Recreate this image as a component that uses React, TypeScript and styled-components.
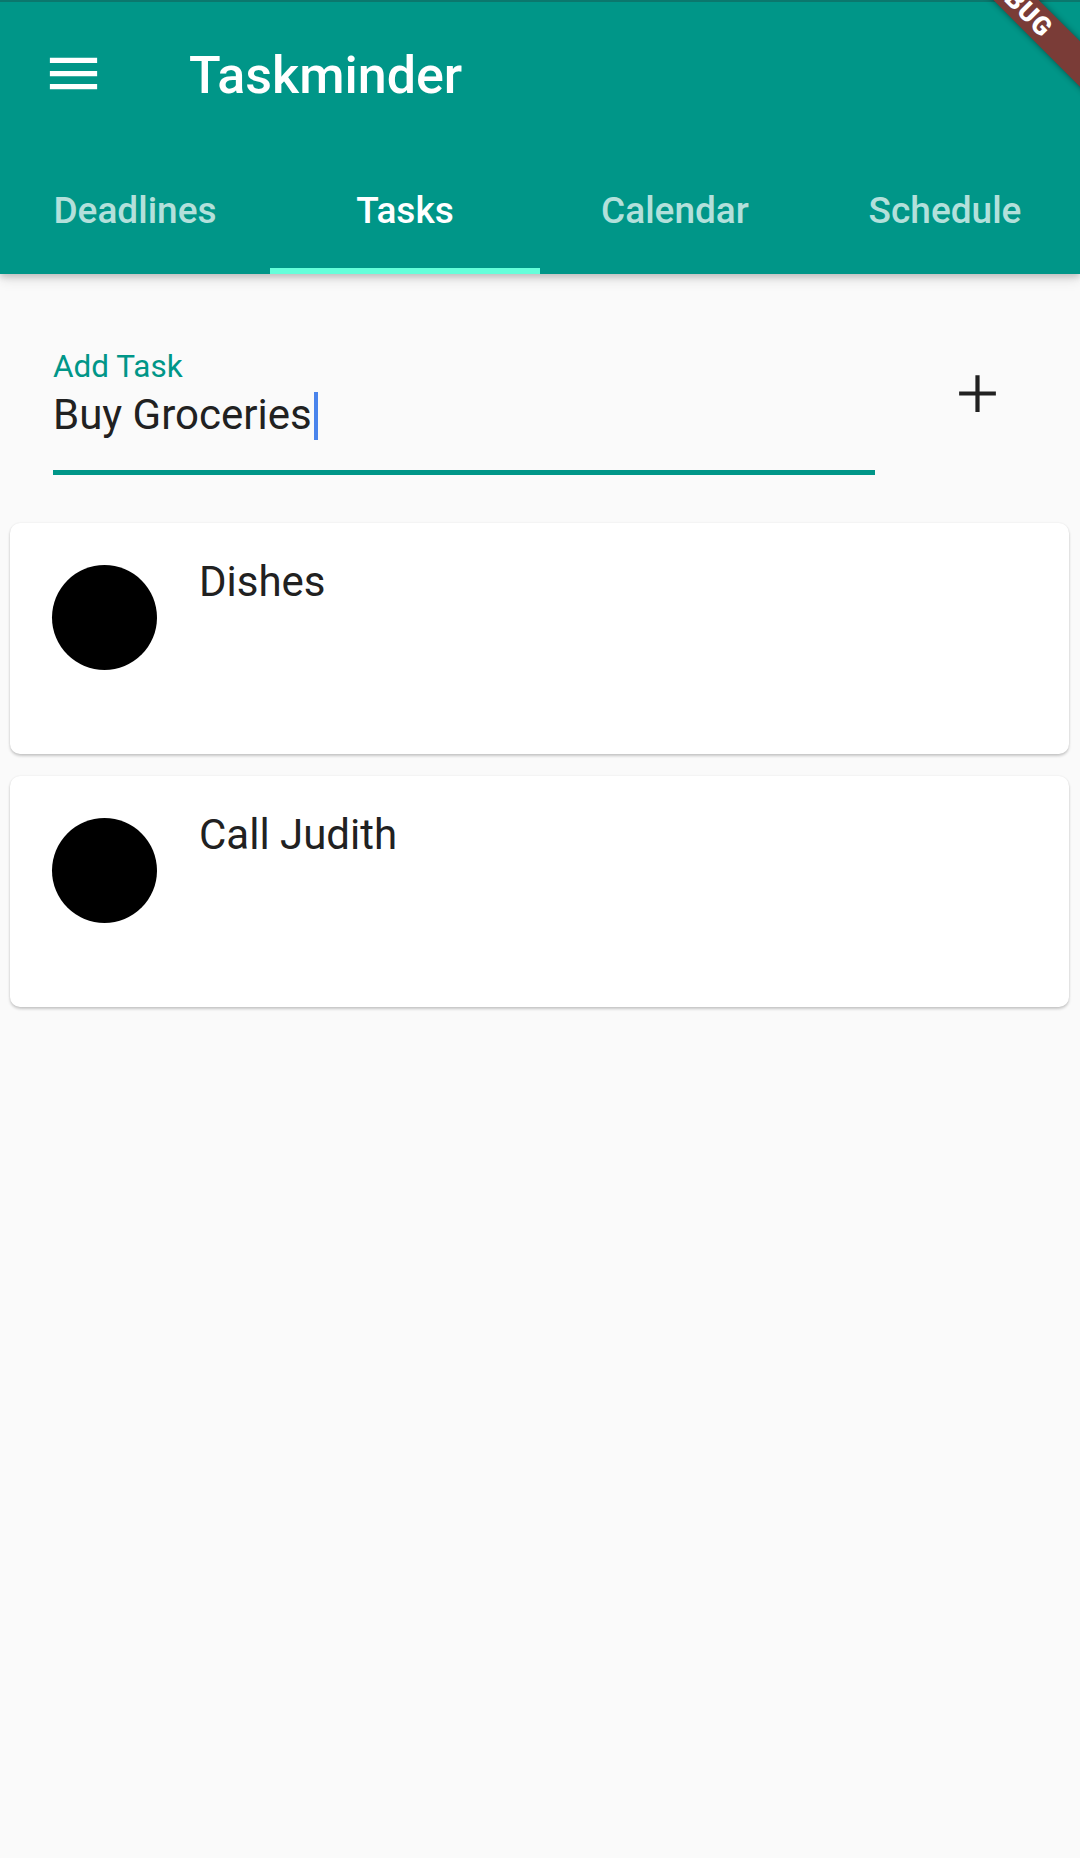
import React from "react";
import styled, { createGlobalStyle } from "styled-components";

const GlobalStyle = createGlobalStyle`
  html, body {
    margin: 0;
    padding: 0;
    background: #fafafa;
    font-family: Roboto, "Noto Sans", Arial, sans-serif;
    overflow: hidden;
  }
  * {
    box-sizing: border-box;
  }
`;

const Screen = styled.div`
  position: relative;
  width: 1080px;
  min-height: 1858px;
  overflow: hidden;
  background: #fafafa;
`;

const Header = styled.header`
  position: relative;
  z-index: 2;
  background: #009688;
  border-top: 2px solid #0b776d;
  box-shadow: 0 3px 6px rgba(0, 0, 0, 0.16), 0 6px 12px rgba(0, 0, 0, 0.1);
`;

const Toolbar = styled.div`
  height: 147px;
  display: flex;
  align-items: center;
  padding-left: 42px;
`;

const MenuButton = styled.div`
  width: 63px;
  height: 63px;
  margin-bottom: 4px;
  color: #ffffff;
  svg {
    display: block;
  }
`;

const Title = styled.h1`
  margin: 0 0 0 84px;
  font-size: 52px;
  font-weight: 500;
  color: #ffffff;
  line-height: 61px;
`;

const TabBar = styled.nav`
  display: flex;
  height: 125px;
`;

const Tab = styled.div<{ $active?: boolean }>`
  flex: 1;
  display: flex;
  align-items: center;
  justify-content: center;
  padding-top: 4px;
  border-bottom: 6px solid ${p => (p.$active ? "#64ffda" : "transparent")};
  font-size: 37px;
  font-weight: 500;
  line-height: 43px;
  color: ${p => (p.$active ? "#ffffff" : "#b3e0db")};
`;

// debug ribbon in the top-right corner, mostly cut off by the screen edge
const Banner = styled.div`
  position: absolute;
  z-index: 5;
  left: 905px;
  top: -7px;
  width: 240px;
  height: 32px;
  padding-right: 22px;
  transform: rotate(45deg);
  background: #7a3c37;
  box-shadow: 0 0 6px rgba(0, 0, 0, 0.45);
  color: #ffffff;
  font-size: 26px;
  font-weight: 900;
  line-height: 32px;
  text-align: center;
  letter-spacing: 1px;
`;

const Body = styled.main`
  padding-bottom: 40px;
`;

const AddRow = styled.div`
  display: flex;
  align-items: flex-start;
  padding-top: 56px;
`;

const Field = styled.div`
  width: 822px;
  margin: 18px 0 0 53px;
  padding-bottom: 30px;
  border-bottom: 5px solid #009688;
`;

const FieldLabel = styled.div`
  font-size: 31.5px;
  line-height: 37px;
  color: #009688;
`;

const FieldValue = styled.div`
  margin-top: 4px;
  display: flex;
  align-items: center;
  font-size: 42px;
  line-height: 49px;
  color: #212121;
`;

const Caret = styled.span`
  display: inline-block;
  width: 4px;
  height: 48px;
  margin-left: 2px;
  margin-top: 3px;
  background: #4a84ec;
`;

const AddButton = styled.button`
  width: 126px;
  height: 126px;
  margin-left: 39px;
  padding: 0;
  border: none;
  background: transparent;
  display: flex;
  align-items: center;
  justify-content: center;
  color: #212121;
  svg {
    display: block;
  }
`;

const List = styled.div`
  display: flex;
  flex-direction: column;
  gap: 22px;
  margin: 48px 11px 0 10px;
`;

const Card = styled.div`
  height: 231px;
  display: flex;
  align-items: flex-start;
  padding: 34px 42px 0;
  background: #ffffff;
  border-radius: 10px;
  box-shadow: 0 2px 3px rgba(0, 0, 0, 0.2), 0 0 2px rgba(0, 0, 0, 0.08);
`;

const Dot = styled.div`
  width: 105px;
  height: 105px;
  margin-top: 8px;
  flex-shrink: 0;
  border-radius: 50%;
  background: #000000;
`;

const TaskName = styled.div`
  margin-left: 42px;
  font-size: 42px;
  line-height: 49px;
  color: #212121;
`;

const tasks = ["Dishes", "Call Judith"];
const tabs = ["Deadlines", "Tasks", "Calendar", "Schedule"];

export default function App() {
  return (
    <>
      <GlobalStyle />
      <Screen>
        <Header>
          <Toolbar>
            <MenuButton>
              <svg width="63" height="63" viewBox="0 0 24 24" fill="currentColor">
                <path d="M3 18h18v-2H3v2zm0-5h18v-2H3v2zm0-7v2h18V6H3z" />
              </svg>
            </MenuButton>
            <Title>Taskminder</Title>
          </Toolbar>
          <TabBar>
            {tabs.map(t => (
              <Tab key={t} $active={t === "Tasks"}>
                {t}
              </Tab>
            ))}
          </TabBar>
        </Header>
        <Banner>DEBUG</Banner>
        <Body>
          <AddRow>
            <Field>
              <FieldLabel>Add Task</FieldLabel>
              <FieldValue>
                Buy Groceries
                <Caret />
              </FieldValue>
            </Field>
            <AddButton>
              <svg width="63" height="63" viewBox="0 0 24 24" fill="currentColor">
                <path d="M19 12.8h-6.2V19h-1.6v-6.2H5v-1.6h6.2V5h1.6v6.2H19v1.6z" />
              </svg>
            </AddButton>
          </AddRow>
          <List>
            {tasks.map(t => (
              <Card key={t}>
                <Dot />
                <TaskName>{t}</TaskName>
              </Card>
            ))}
          </List>
        </Body>
      </Screen>
    </>
  );
}
